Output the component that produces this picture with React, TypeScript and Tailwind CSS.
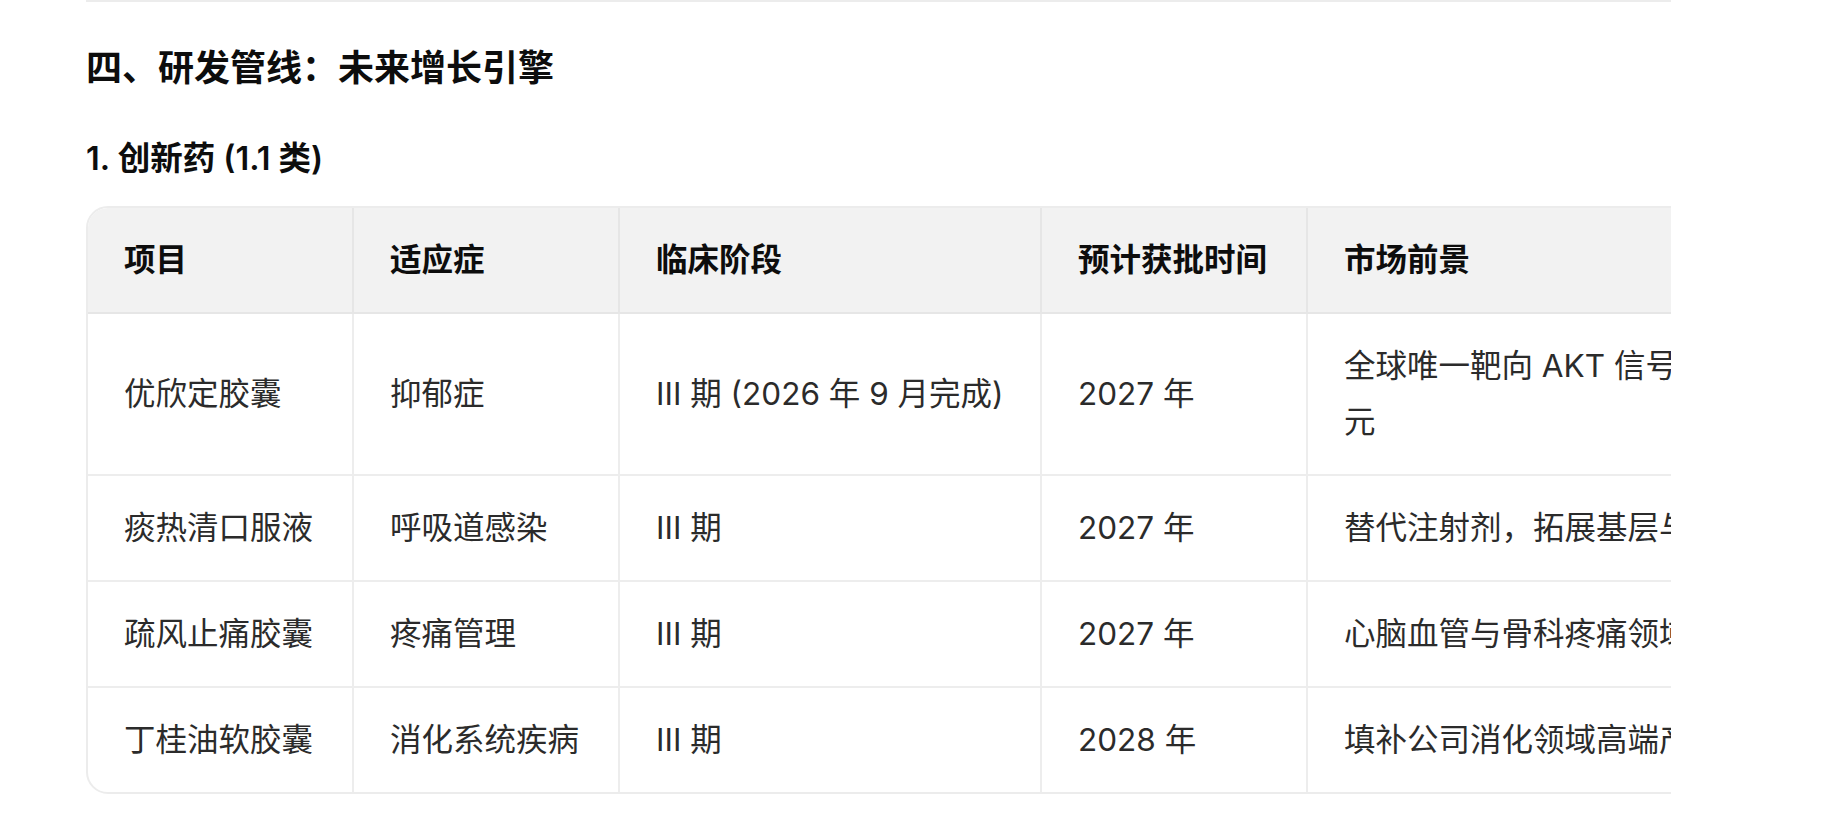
import React from "react";

const font = { fontFamily: '"Inter", "Noto Sans CJK SC", sans-serif' };

type Row = { name: string; ind: string; stage: string; year: string; market: React.ReactNode };

const rows: Row[] = [
  {
    name: "优欣定胶囊",
    ind: "抑郁症",
    stage: "III 期 (2026 年 9 月完成)",
    year: "2027 年",
    market: (
      <>
        <span className="whitespace-nowrap">全球唯一靶向 AKT 信号通路的抗抑郁中药，潜在市场规模超 30 亿</span>
        <br />元
      </>
    ),
  },
  { name: "痰热清口服液", ind: "呼吸道感染", stage: "III 期", year: "2027 年", market: "替代注射剂，拓展基层与零售市场" },
  { name: "疏风止痛胶囊", ind: "疼痛管理", stage: "III 期", year: "2027 年", market: "心脑血管与骨科疼痛领域新增长点" },
  { name: "丁桂油软胶囊", ind: "消化系统疾病", stage: "III 期", year: "2028 年", market: "填补公司消化领域高端产品空白" },
];

const headers = ["项目", "适应症", "临床阶段", "预计获批时间", "市场前景"];

export default function App() {
  return (
    <div className="min-h-[822px] bg-white" style={font}>
      <div className="ml-[86px] w-[1585px]">
        <div className="h-[2px] bg-[#ececec]" />
        <h2 className="mt-[42px] text-[36px] leading-[48px] font-bold text-[#0d0d0d]">
          四、研发管线：未来增长引擎
        </h2>
        <h3 className="mt-[47px] text-[32.5px] leading-[40px] font-semibold text-[#0d0d0d]">1. 创新药 (1.1 类)</h3>
        <div className="mt-[27px] overflow-hidden">
          <div className="w-[2100px] rounded-[22px] border-2 border-[#ececec] overflow-hidden">
            <div className="grid grid-cols-[266px_266px_422px_266px_876px] text-[31.5px] leading-[56px]">
              {headers.map((h, i) => (
                <div
                  key={h}
                  className={`bg-[#f2f2f2] border-b-2 border-[#e6e6e6] px-[36px] py-[24px] font-bold text-[#0d0d0d] whitespace-nowrap ${
                    i < 4 ? "border-r-2" : ""
                  }`}
                >
                  {h}
                </div>
              ))}
              {rows.map((r, ri) => {
                const last = ri === rows.length - 1;
                const cells = [r.name, r.ind, r.stage, r.year, r.market];
                return cells.map((c, ci) => (
                  <div
                    key={`${ri}-${ci}`}
                    className={`flex items-center px-[36px] py-[24px] text-[#2b2b2b] border-[#ededed] ${
                      last ? "" : "border-b-2"
                    } ${ci < 4 ? "border-r-2 whitespace-nowrap" : ""}`}
                  >
                    <div>{c}</div>
                  </div>
                ));
              })}
            </div>
          </div>
        </div>
      </div>
    </div>
  );
}
